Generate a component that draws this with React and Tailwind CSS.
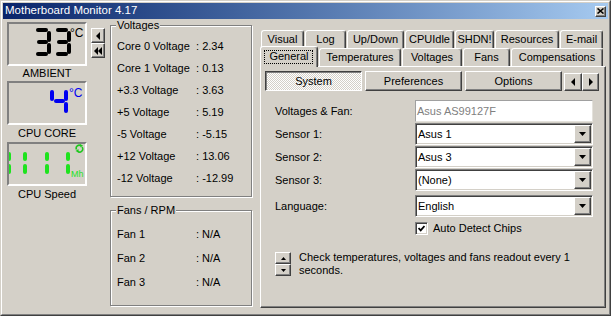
import React from "react";

const raised =
  "border border-t-white border-l-white border-r-[#404040] border-b-[#404040] shadow-[inset_-1px_-1px_0_#808080]";
const sunken =
  "border border-t-[#808080] border-l-[#808080] border-r-white border-b-white shadow-[inset_1px_1px_0_#404040,inset_-1px_-1px_0_#d4d0c8]";
const lcd = "w-[80px] h-[44px] border-2 border-t-[#808080] border-l-[#808080] border-r-white border-b-white overflow-hidden";

// 7 segment layout for an 18x28 digit
const SEGS = {
  a: [3, 0, 12, 4],
  b: [14, 3, 4, 11],
  c: [14, 15, 4, 11],
  d: [3, 24, 12, 4],
  e: [0, 15, 4, 11],
  f: [0, 3, 4, 11],
  g: [4, 12, 11, 4],
};

function Digit({ x, y, on, color }) {
  return (
    <g>
      {on.split("").map((k) => {
        const [sx, sy, w, h] = SEGS[k];
        return <rect key={k} x={x + sx} y={y + sy} width={w} height={h} rx="2" fill={color} />;
      })}
    </g>
  );
}

function Tri({ dir = "left", className = "" }) {
  const pts = {
    left: "4,0 4,8 0,4",
    right: "0,0 0,8 4,4",
  };
  return (
    <svg width="4" height="8" viewBox="0 0 4 8" className={className}>
      <polygon points={pts[dir]} fill="#000" />
    </svg>
  );
}

function Down() {
  return (
    <svg width="7" height="4" viewBox="0 0 7 4">
      <polygon points="0,0 7,0 3.5,4" fill="#000" />
    </svg>
  );
}

function Combo({ value }) {
  return (
    <div className={`w-[178px] h-[22px] bg-white ${sunken} flex items-center justify-between p-[1px]`}>
      <span className="pl-[1px]">{value}</span>
      <div className={`w-[17px] h-full bg-[#d4d0c8] ${raised} flex items-center justify-center`}>
        <Down />
      </div>
    </div>
  );
}

function GroupBox({ title, className, children }) {
  return (
    <div className={`relative w-[142px] border border-[#808080] shadow-[inset_1px_1px_0_#fff,1px_1px_0_#fff] ${className}`}>
      <span className="absolute left-[5px] top-[-7px] bg-[#d4d0c8] px-[1px] leading-[13px]">{title}</span>
      {children}
    </div>
  );
}

const voltages = [
  ["Core 0 Voltage", "2.34"],
  ["Core 1 Voltage", "0.13"],
  ["+3.3 Voltage", "3.63"],
  ["+5 Voltage", "5.19"],
  ["-5 Voltage", "-5.15"],
  ["+12 Voltage", "13.06"],
  ["-12 Voltage", "-12.99"],
];

const tabRow1 = [
  ["Visual", "w-[43px]"],
  ["Log", "w-[41px]"],
  ["Up/Down", "w-[57px]"],
  ["CPUIdle", "w-[49px]"],
  ["SHDN!", "w-[39px]"],
  ["Resources", "w-[64px]"],
  ["E-mail", "w-[43px]"],
];

const tabRow2 = [
  ["Temperatures", "w-[82px]"],
  ["Voltages", "w-[60px]"],
  ["Fans", "w-[47px]"],
  ["Compensations", "w-[92px]"],
];

const tab =
  "h-full border-l border-t border-r border-l-white border-t-white border-r-[#404040] shadow-[inset_-1px_0_0_#808080] rounded-t-[3px] flex items-center justify-center bg-[#d4d0c8]";

export default function App() {
  return (
    <div className="w-[611px] h-[316px] bg-[#d4d0c8] border border-t-[#d4d0c8] border-l-[#d4d0c8] border-r-[#404040] border-b-[#404040] font-['Liberation_Sans',Arial,sans-serif] text-[11px] text-black leading-none overflow-hidden">
      <div className="h-full border border-t-white border-l-white border-r-[#808080] border-b-[#808080] p-[1px] flex flex-col">
        {/* title bar */}
        <div className="h-[16px] shrink-0 flex items-center justify-between bg-linear-to-r from-[#0a246a] to-[#a6caf0] pl-[2px] pr-[2px]">
          <span className="text-white text-[11.5px]">Motherboard Monitor 4.17</span>
          <div className={`w-[11px] h-[11px] bg-[#d4d0c8] ${raised} flex items-center justify-center`}>
            <svg width="7" height="6" viewBox="0 0 7 6">
              <path d="M0.5 0.5 L6.5 5.5 M6.5 0.5 L0.5 5.5" stroke="#000" strokeWidth="1.6" />
            </svg>
          </div>
        </div>

        <div className="flex flex-1">
          {/* left LCD column */}
          <div className="w-[107px] shrink-0 pl-[4px] pt-[3px] flex flex-col">
            <div className="flex items-start gap-[4px]">
              <div className={lcd}>
                <svg width="76" height="40" viewBox="0 0 76 40">
                  <Digit x={24} y={4} on="abcdg" color="#000" />
                  <Digit x={44} y={4} on="abcdg" color="#000" />
                  <text x="61" y="13" fontSize="12" fill="#000" fontFamily="Liberation Sans, Arial, sans-serif">°C</text>
                </svg>
              </div>
              <div className="mt-[6px] flex flex-col">
                <div className={`w-[14px] h-[15px] ${raised} flex items-center justify-center`}>
                  <Tri dir="left" />
                </div>
                <div className={`w-[14px] h-[15px] ${raised} flex items-center justify-center`}>
                  <Tri dir="left" />
                  <Tri dir="left" />
                </div>
              </div>
            </div>
            <div className="w-[80px] h-[15px] flex items-center justify-center">AMBIENT</div>
            <div className={lcd}>
              <svg width="76" height="40" viewBox="0 0 76 40">
                <Digit x={41} y={4} on="bcfg" color="#0000f0" />
                <text x="60" y="14" fontSize="12" fill="#0000f0" fontFamily="Liberation Sans, Arial, sans-serif">°C</text>
              </svg>
            </div>
            <div className="w-[80px] h-[17px] flex items-center justify-center">CPU CORE</div>
            <div className={lcd}>
              <svg width="76" height="40" viewBox="0 0 76 40">
                {[-2, 14, 36, 57].map((x) => (
                  <g key={x}>
                    <rect x={x} y="8" width="4" height="9" rx="2" fill="#1ee31e" />
                    <rect x={x} y="20" width="4" height="10" rx="2" fill="#1ee31e" />
                  </g>
                ))}
                <text x="62" y="33" fontSize="9" fill="#1ee31e" fontFamily="Liberation Sans, Arial, sans-serif">Mh</text>
                <path d="M67.5 5.5 A3 3 0 0 1 72 1.8" stroke="#1ec81e" strokeWidth="1.6" fill="none" />
                <path d="M73 3 A3 3 0 0 1 68.5 7" stroke="#1ec81e" strokeWidth="1.6" fill="none" />
                <polygon points="71,0 74,1.5 71.5,3.5" fill="#1ec81e" />
                <polygon points="69.5,5 69.5,8.5 66.5,7" fill="#1ec81e" />
              </svg>
            </div>
            <div className="w-[80px] h-[16px] flex items-center justify-center">CPU Speed</div>
          </div>

          {/* middle group boxes */}
          <div className="w-[150px] shrink-0 pt-[6px] flex flex-col">
            <GroupBox title="Voltages" className="h-[172px] pt-[9px]">
              {voltages.map(([label, value]) => (
                <div key={label} className="h-[22px] flex items-center pl-[6px]">
                  <span className="w-[79px]">{label}</span>
                  <span>: {value}</span>
                </div>
              ))}
            </GroupBox>
            <GroupBox title="Fans / RPM" className="h-[96px] mt-[13px] pt-[11px]">
              {["Fan 1", "Fan 2", "Fan 3"].map((f) => (
                <div key={f} className="h-[24px] flex items-center pl-[6px]">
                  <span className="w-[79px]">{f}</span>
                  <span>: N/A</span>
                </div>
              ))}
            </GroupBox>
          </div>

          {/* tab control */}
          <div className="w-[346px] shrink-0 pt-[11px] flex flex-col">
            <div className="h-[18px] flex gap-[1px] pl-[1px]">
              {tabRow1.map(([t, w]) => (
                <div key={t} className={`${tab} ${w}`}>{t}</div>
              ))}
            </div>
            <div className="h-[18px] flex items-start gap-[1px] relative z-10">
              <div className={`${tab} relative w-[58px] !h-[21px] -mt-[2px]`}>
                <span className="absolute left-[3px] right-[4px] top-[3px] bottom-[3px] border border-dotted border-black" />
                <span className="-mt-[1px]">General</span>
              </div>
              {tabRow2.map(([t, w]) => (
                <div key={t} className={`${tab} ${w}`}>{t}</div>
              ))}
            </div>
            <div className="h-[242px] border border-t-white border-l-white border-r-[#404040] border-b-[#404040] shadow-[inset_-1px_-1px_0_#808080] pl-[4px] pt-[4px] flex flex-col">
              <div className="h-[20px] flex items-start">
                <div className="w-[97px] h-[20px] border border-t-[#404040] border-l-[#404040] border-r-white border-b-white shadow-[inset_1px_1px_0_#808080] bg-[conic-gradient(#fff_25%,#d4d0c8_0_50%,#fff_0_75%,#d4d0c8_0)] bg-[length:2px_2px] flex items-center justify-center">
                  System
                </div>
                <div className={`w-[97px] h-[20px] ml-[3px] ${raised} flex items-center justify-center`}>Preferences</div>
                <div className={`w-[97px] h-[20px] ml-[3px] ${raised} flex items-center justify-center`}>Options</div>
                <div className="ml-[2px] mt-[2px] flex">
                  <div className={`w-[18px] h-[18px] ${raised} flex items-center justify-center`}>
                    <Tri dir="left" />
                  </div>
                  <div className={`w-[17px] h-[18px] ${raised} flex items-center justify-center`}>
                    <Tri dir="right" />
                  </div>
                </div>
              </div>

              <div className="pl-[10px] mt-[9px] flex flex-col">
                <div className="h-[23px] flex items-start">
                  <div className="w-[140px] h-[22px] flex items-center">Voltages &amp; Fan:</div>
                  <div className="w-[178px] h-[22px] bg-white border border-t-[#a0a0a0] border-l-[#a0a0a0] border-r-[#e4e2dc] border-b-[#e4e2dc] flex items-center pl-[1px] text-[#808080]">
                    Asus AS99127F
                  </div>
                </div>
                {[
                  ["Sensor 1:", "Asus 1"],
                  ["Sensor 2:", "Asus 3"],
                  ["Sensor 3:", "(None)"],
                ].map(([l, v]) => (
                  <div key={l} className="h-[23px] flex items-start">
                    <div className="w-[140px] h-[22px] flex items-center">{l}</div>
                    <Combo value={v} />
                  </div>
                ))}
                <div className="h-[23px] mt-[3px] flex items-start">
                  <div className="w-[140px] h-[22px] flex items-center">Language:</div>
                  <Combo value="English" />
                </div>
                <div className="mt-[4px] pl-[140px] h-[13px] flex items-center">
                  <div className={`w-[13px] h-[13px] bg-white ${sunken} flex items-center justify-center`}>
                    <svg width="7" height="7" viewBox="0 0 7 7">
                      <path d="M0.5 3 L2.7 5.3 L6.5 1" stroke="#000" strokeWidth="1.8" fill="none" />
                    </svg>
                  </div>
                  <span className="ml-[5px]">Auto Detect Chips</span>
                </div>
                <div className="mt-[17px] flex items-start">
                  <div className="flex flex-col">
                    <div className={`w-[16px] h-[12px] ${raised} flex items-center justify-center`}>
                      <svg width="5" height="3" viewBox="0 0 5 3">
                        <polygon points="0,3 5,3 2.5,0" fill="#000" />
                      </svg>
                    </div>
                    <div className={`w-[16px] h-[12px] ${raised} flex items-center justify-center`}>
                      <svg width="5" height="3" viewBox="0 0 5 3">
                        <polygon points="0,0 5,0 2.5,3" fill="#000" />
                      </svg>
                    </div>
                  </div>
                  <div className="ml-[8px] -mt-[1px] leading-[13px] whitespace-nowrap">
                    Check temperatures, voltages and fans readout every 1
                    <br />
                    seconds.
                  </div>
                </div>
              </div>
            </div>
          </div>
        </div>
      </div>
    </div>
  );
}
